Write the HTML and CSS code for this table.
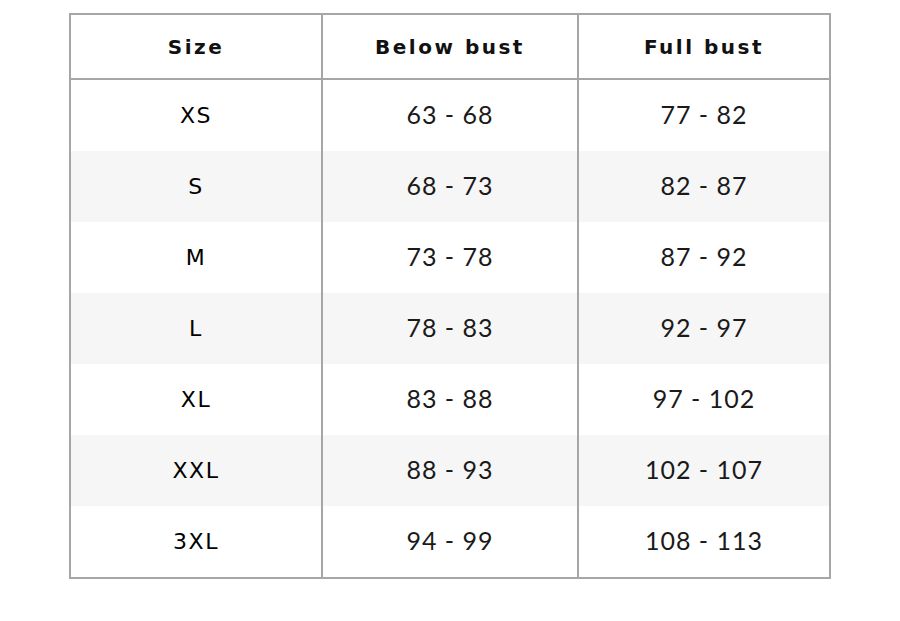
FILE: index.html
```html
<!DOCTYPE html>
<html>
<head>
<meta charset="utf-8">
<link rel="stylesheet" href="styles.css">
</head>
<body>
<div class="chart">
  <div class="row head">
    <div class="cell">Size</div>
    <div class="cell">Below bust</div>
    <div class="cell">Full bust</div>
  </div>
  <div class="row"><div class="cell size">XS</div><div class="cell num">63 - 68</div><div class="cell num">77 - 82</div></div>
  <div class="row alt"><div class="cell size">S</div><div class="cell num">68 - 73</div><div class="cell num">82 - 87</div></div>
  <div class="row"><div class="cell size">M</div><div class="cell num">73 - 78</div><div class="cell num">87 - 92</div></div>
  <div class="row alt"><div class="cell size">L</div><div class="cell num">78 - 83</div><div class="cell num">92 - 97</div></div>
  <div class="row"><div class="cell size">XL</div><div class="cell num">83 - 88</div><div class="cell num">97 - 102</div></div>
  <div class="row alt"><div class="cell size">XXL</div><div class="cell num">88 - 93</div><div class="cell num">102 - 107</div></div>
  <div class="row"><div class="cell size">3XL</div><div class="cell num">94 - 99</div><div class="cell num">108 - 113</div></div>
</div>
</body>
</html>
```
FILE: styles.css
```css
html, body {
  margin: 0;
  padding: 0;
  background: #ffffff;
}
body {
  padding: 13px 0 0 69px;
  color: #111111;
}
.chart {
  width: 758px;
  border: 2px solid #a6a6a6;
  display: flex;
  flex-direction: column;
}
.row {
  display: grid;
  grid-template-columns: 250px 256px 252px;
  height: 71px;
}
.row.alt {
  background: #f6f6f6;
}
.row.head {
  height: 63px;
  border-bottom: 2px solid #a6a6a6;
}
.cell {
  display: flex;
  align-items: center;
  justify-content: center;
}
.cell + .cell {
  border-left: 2px solid #a6a6a6;
}
.head .cell {
  font-family: "DejaVu Sans", "Liberation Sans", sans-serif;
  font-weight: bold;
  font-size: 20px;
  letter-spacing: 2.5px;
  padding-top: 1px;
}
.size {
  font-family: "DejaVu Sans", "Lato", sans-serif;
  font-size: 22px;
  letter-spacing: 1.5px;
  font-weight: 400;
  color: #000000;
  padding-bottom: 1px;
}
.num {
  font-family: "Lato", "DejaVu Sans", sans-serif;
  font-weight: 400;
  font-size: 25px;
  letter-spacing: 1px;
  color: #1a1a1a;
  padding-bottom: 4px;
}
```
